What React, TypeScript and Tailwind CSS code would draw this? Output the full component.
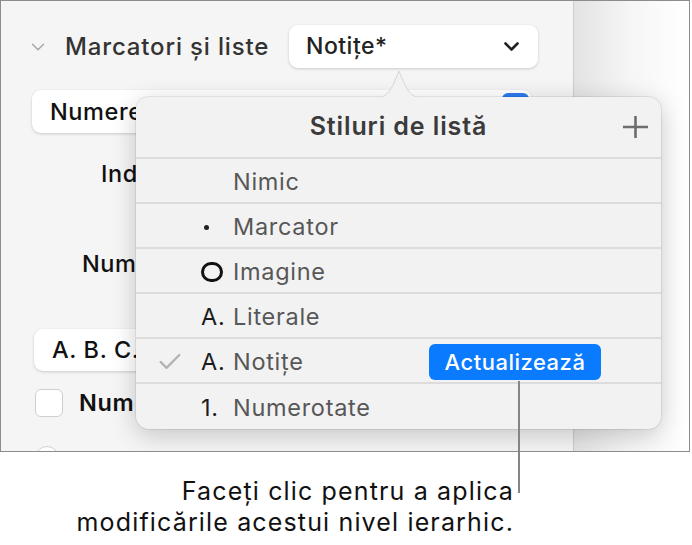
import { ChevronDown, Check } from 'lucide-react';

type ListStyle = {
  prefix: 'none' | 'bullet' | 'image' | 'text';
  mark?: string;
  label: string;
  current?: boolean;
};

const styles: ListStyle[] = [
  { prefix: 'none', label: 'Nimic' },
  { prefix: 'bullet', label: 'Marcator' },
  { prefix: 'image', label: 'Imagine' },
  { prefix: 'text', mark: 'A.', label: 'Literale' },
  { prefix: 'text', mark: 'A.', label: 'Notițe', current: true },
  { prefix: 'text', mark: '1.', label: 'Numerotate' },
];

function Prefix({ item }: { item: ListStyle }) {
  if (item.prefix === 'bullet') {
    return <span className="block w-[5px] h-[5px] ml-[3px] rounded-full bg-[#222]" />;
  }
  if (item.prefix === 'image') {
    return <span className="block w-[22px] h-[20px] rounded-full border-[3px] border-[#111]" />;
  }
  if (item.prefix === 'text') {
    return <span className="text-[#1c1c1c]">{item.mark}</span>;
  }
  return null;
}

function StylesPopover() {
  return (
    <div className="absolute left-[135px] top-[96px] w-[525px] h-[332px] rounded-[13px] bg-[#f2f2f2] shadow-[0_6px_26px_rgba(0,0,0,0.2),0_0_0_1px_rgba(0,0,0,0.07)]">
      <svg
        className="absolute left-[240px] -top-[28px]"
        width="46"
        height="30"
        viewBox="0 0 46 30"
      >
        <path d="M0 29 C10 29 14 22 18 14 L23 2 L28 14 C32 22 36 29 46 29 Z" fill="#f2f2f2" stroke="#d6d6d6" strokeWidth="1" />
        <rect x="0" y="28" width="46" height="3" fill="#f2f2f2" />
      </svg>

      <div className="relative flex items-center justify-center h-[62px] border-b-2 border-[#dcdcdc]">
        <span className="text-[25px] font-semibold text-[#3b3b3b] tracking-[0.9px]">Stiluri de listă</span>
        <svg className="absolute right-[13px] top-[19px]" width="25" height="22" viewBox="0 0 25 22">
          <path d="M12.5 0 V22 M0 11 H25" stroke="#6d6d6d" strokeWidth="2.6" />
        </svg>
      </div>

      <ul>
        {styles.map((item, i) => (
          <li
            key={item.label}
            className={
              i < styles.length - 1
                ? 'flex items-center h-[45px] pt-[3px] pl-[20px] border-b-2 border-[#dcdcdc] text-[23.5px] tracking-[0.7px] leading-none'
                : 'flex items-center h-[45px] pt-[3px] pl-[20px] text-[23.5px] tracking-[0.7px] leading-none'
            }
          >
            <span className="w-[45px] flex items-center">
              {item.current && <Check className="text-[#b3b3b3]" size={28} strokeWidth={2} />}
            </span>
            <span className="w-[32px] flex items-center">
              <Prefix item={item} />
            </span>
            <span className="text-[#575757]">{item.label}</span>
            {item.current && (
              <button className="ml-auto mr-[60px] h-[36px] w-[172px] rounded-[6px] bg-[#0a7aff] text-white text-[22px] font-medium tracking-[0.5px]">
                Actualizează
              </button>
            )}
          </li>
        ))}
      </ul>
    </div>
  );
}

function Sidebar() {
  return (
    <div className="w-[572px] h-full shrink-0 overflow-hidden bg-[#f5f5f5] text-[23.5px] tracking-[0.6px] leading-none text-[#1d1d1d]">
      <div className="flex items-center h-[43px] mt-[24px] pl-[26px] pr-[35px]">
        <ChevronDown className="text-[#a3a3a3]" size={22} strokeWidth={1.5} />
        <span className="ml-[16px] text-[24px] tracking-[0.85px] font-medium text-[#333]">Marcatori și liste</span>
        <div className="ml-auto w-[249px] h-[43px] rounded-[9px] bg-white shadow-[0_1px_3px_rgba(0,0,0,0.18)] flex items-center pl-[17px] pr-[19px]">
          <span className="text-[23px] tracking-[0.5px] font-medium text-[#222]">Notițe*</span>
          <svg className="ml-auto" width="15" height="9" viewBox="0 0 15 9">
            <path d="M1.5 1.5 L7.5 7.5 L13.5 1.5" fill="none" stroke="#222" strokeWidth="2.6" strokeLinecap="round" strokeLinejoin="round" />
          </svg>
        </div>
      </div>

      <div className="flex items-center h-[43px] mt-[22px] ml-[31px] w-[500px] rounded-[9px] bg-white shadow-[0_1px_3px_rgba(0,0,0,0.18)] pl-[18px] pr-[3px]">
        <span className="w-[86px] overflow-hidden whitespace-nowrap font-medium text-[#111]">Numere</span>
        <span className="ml-auto w-[27px] h-[37px] rounded-[6px] bg-[#2b7bf0]" />
      </div>

      <div className="mt-[29px] ml-[100px] w-[35px] h-[24px] leading-[24px] overflow-hidden whitespace-nowrap font-medium text-[#111]">Indentare</div>
      <div className="mt-[66px] ml-[81px] w-[54px] h-[24px] leading-[24px] overflow-hidden whitespace-nowrap font-medium text-[#111]">Numere</div>

      <div className="flex items-center h-[42px] mt-[53px] ml-[33px] w-[420px] rounded-[9px] bg-white shadow-[0_1px_3px_rgba(0,0,0,0.18)] pl-[18px]">
        <span className="w-[84px] overflow-hidden whitespace-nowrap font-medium text-[#111]">A. B. C.</span>
      </div>

      <div className="flex items-center mt-[18px] ml-[34px] h-[28px]">
        <span className="w-[28px] h-[28px] rounded-[6px] bg-white border border-[#cfcfcf]" />
        <span className="ml-[16px] w-[56px] overflow-hidden whitespace-nowrap font-semibold text-[#111]">Numere</span>
      </div>

      <div className="mt-[29px] ml-[34px] w-[24px] h-[24px] rounded-full border border-[#cfcfcf] bg-white" />
    </div>
  );
}

export default function App() {
  return (
    <div className="relative w-[692px] h-[545px] bg-white overflow-hidden font-['Inter',sans-serif]">
      <div className="relative w-[690px] h-[452px] border border-[#8c8c8c] flex overflow-hidden">
        <Sidebar />
        <div className="flex-1 border-l border-[#cdcdcd] bg-linear-to-r from-[#e3e3e3] via-[#f6f6f6] to-white" />
        <StylesPopover />
      </div>

      <div className="absolute left-[518px] top-[381px] w-[1.5px] h-[112px] bg-[#858585]" />

      <div className="w-[514px] mt-[24px] text-right text-[25px] tracking-[1.15px] leading-[31px] text-[#111]">
        <p>Faceți clic pentru a aplica</p>
        <p>modificările acestui nivel ierarhic.</p>
      </div>
    </div>
  );
}
